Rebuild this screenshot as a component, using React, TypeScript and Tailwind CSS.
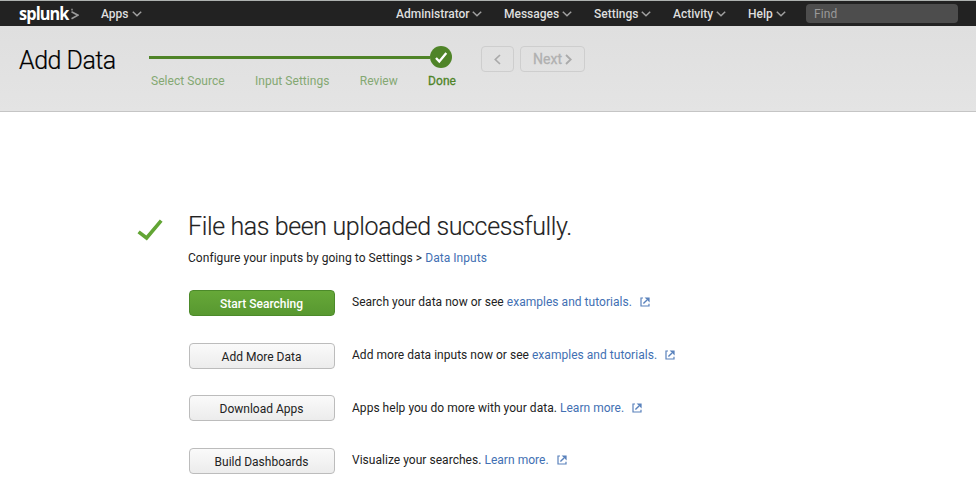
import React from 'react';

function Chevron() {
  return (
    <svg className="h-[6px] w-[10px] shrink-0" viewBox="0 0 10 6" fill="none" stroke="#a0a0a0" strokeWidth="1.5">
      <path d="M0.8 0.8 L5 4.8 L9.2 0.8" />
    </svg>
  );
}

function NavItem({ label, width }: { label: string; width: string }) {
  return (
    <button className={`flex shrink-0 items-center justify-between whitespace-nowrap ${width}`}>
      {label}
      <Chevron />
    </button>
  );
}

function External() {
  return (
    <svg className="ml-[8px] h-[10px] w-[10px]" viewBox="0 0 10 10" fill="none" stroke="#5a82bc" strokeWidth="1.2">
      <path d="M3 1 H1 V9 H9 V6.8" />
      <path d="M3.4 6.6 L7 3" strokeWidth="1.4" />
      <path d="M4.6 0.5 H9.6 V5.4 Z" fill="#5a82bc" stroke="none" />
    </svg>
  );
}

type RowProps = {
  action: string;
  text: string;
  link: string;
  gap: string;
  lineHeight?: string;
  primary?: boolean;
};

function ActionRow({ action, text, link, gap, lineHeight = 'h-[24px]', primary }: RowProps) {
  const look = primary
    ? 'border-[#4c8a2a] bg-linear-to-b from-[#66a838] to-[#589830] font-medium text-white'
    : 'border-[#bcbcbc] bg-linear-to-b from-[#fafafa] to-[#ececec] text-[#222]';
  return (
    <div className={`flex h-[26px] ${gap}`}>
      <button className={`h-[26px] w-[146px] rounded-[4px] border pt-[2px] pr-px text-[12px] leading-[22px] ${look}`}>
        {action}
      </button>
      <p className={`ml-[17px] flex items-center text-[12px] tracking-[0.03px] whitespace-pre ${lineHeight}`}>
        {text} <a className="text-[#4270b3]">{link}</a>
        <External />
      </p>
    </div>
  );
}

export default function App() {
  return (
    <div className="h-[495px] w-[976px] overflow-hidden border-t border-[#aeb2b0] bg-white font-['Roboto',sans-serif] text-[#222]">
      <nav className="flex h-[25px] items-center bg-[#222] text-[12px] font-medium text-[#dedede]">
        <div className="ml-[19px] flex w-[82px] items-center">
          <span className="-mt-[2px] w-[52px] origin-left scale-x-[0.88] font-['Open_Sans',sans-serif] text-[18.5px] leading-[24px] font-bold tracking-[-1px] text-white">
            splunk
          </span>
          <svg className="mt-[1px] h-[13px] w-[8px]" viewBox="0 0 8 13" fill="none" stroke="#999" strokeWidth="1.6">
            <path d="M0.5 3.8 L7 7.2 L0.5 10.8" />
            <path d="M1 0.8 V2.4" strokeWidth="1.4" />
          </svg>
        </div>
        <NavItem label="Apps" width="w-[41px]" />
        <div className="ml-[254px] flex gap-[22px]">
          <NavItem label="Administrator" width="w-[86px]" />
          <NavItem label="Messages" width="w-[68px]" />
          <NavItem label="Settings" width="w-[57px]" />
          <NavItem label="Activity" width="w-[53px]" />
          <NavItem label="Help" width="w-[38px]" />
        </div>
        <div className="ml-[20px] h-[19px] w-[152px] rounded-[4px] bg-[#4d4d4d] pl-[8px] text-[12px] leading-[20px] font-normal tracking-[0.1px] text-[#999]">
          Find
        </div>
      </nav>

      <header className="flex h-[86px] border-b border-[#c5c5c5] bg-linear-to-b from-[#dfdfdf] to-[#e4e4e4]">
        <h1 className="mt-[20px] ml-[19px] w-[130px] text-[25px] leading-[30px] font-light tracking-[-0.5px] whitespace-nowrap text-black [-webkit-text-stroke:0.2px_#000]">
          Add Data
        </h1>
        <div className="mt-[20px] w-[307px]">
          <div className="flex h-[22px] items-center">
            <div className="h-[3px] w-[281px] bg-[#4f8428]" />
            <svg className="h-[22px] w-[22px]" viewBox="0 0 22 22" fill="none">
              <circle cx="11" cy="11" r="11" fill="#4f8428" />
              <path d="M6 12 L9.3 15.6 L16.3 7" stroke="#fff" strokeWidth="2.3" />
            </svg>
          </div>
          <div className="mt-[4px] ml-[2px] flex justify-between text-[12px] leading-[18px] tracking-[0.04px] whitespace-nowrap text-[#84a872]">
            <span>Select Source</span>
            <span>Input Settings</span>
            <span>Review</span>
            <span className="text-[#4f8428] [-webkit-text-stroke:0.3px_#4f8428]">Done</span>
          </div>
        </div>
        <div className="mt-[20px] ml-[25px] flex h-[26px] gap-[6px] text-[#b0b0b0]">
          <button className="flex w-[33px] items-center justify-center rounded-[4px] border border-[#cecece]">
            <svg className="h-[11px] w-[7px]" viewBox="0 0 7 11" fill="none" stroke="#aaa" strokeWidth="1.7">
              <path d="M6 1 L1.3 5.5 L6 10" />
            </svg>
          </button>
          <button className="flex w-[65px] items-center justify-center gap-[3px] rounded-[4px] border border-[#cecece] text-[14px] [-webkit-text-stroke:0.3px_#b0b0b0]">
            Next
            <svg className="h-[11px] w-[7px]" viewBox="0 0 7 11" fill="none" stroke="#aaa" strokeWidth="1.8">
              <path d="M1 1 L5.7 5.5 L1 10" />
            </svg>
          </button>
        </div>
      </header>

      <main className="flex pt-[97px]">
        <svg className="mt-[10px] ml-[137px] h-[22px] w-[26px]" viewBox="0 0 26 22" fill="none" stroke="#62a534" strokeWidth="3.6">
          <path d="M1.6 12.8 L9.6 19 L24.2 1.6" />
        </svg>
        <section className="ml-[26px]">
          <h2 className="mt-[3px] -ml-px text-[25px] leading-[30px] font-light tracking-[-0.38px] whitespace-nowrap [-webkit-text-stroke:0.15px_#222]">
            File has been uploaded successfully.
          </h2>
          <p className="mt-[7px] -ml-px text-[12px] leading-[18px] tracking-[0.05px]">
            Configure your inputs by going to Settings &gt; <a className="text-[#4270b3]">Data Inputs</a>
          </p>
          <ActionRow primary gap="mt-[23px]" action="Start Searching" text="Search your data now or see" link="examples and tutorials." />
          <ActionRow gap="mt-[27px]" action="Add More Data" text="Add more data inputs now or see" link="examples and tutorials." />
          <ActionRow gap="mt-[26px]" lineHeight="h-[26px]" action="Download Apps" text="Apps help you do more with your data." link="Learn more." />
          <ActionRow gap="mt-[27px]" action="Build Dashboards" text="Visualize your searches." link="Learn more." />
        </section>
      </main>
    </div>
  );
}
